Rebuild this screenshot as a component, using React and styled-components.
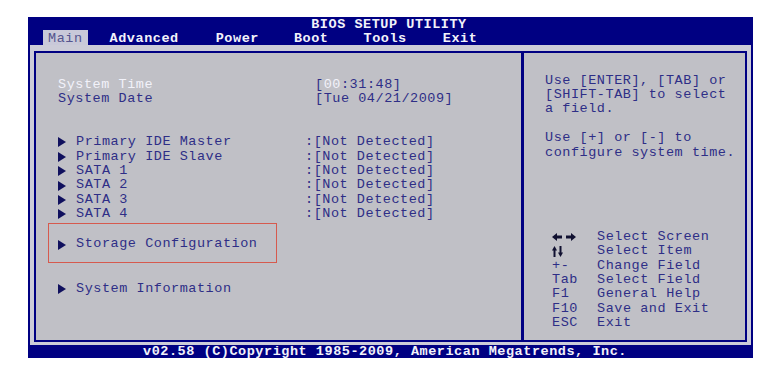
import React from 'react';
import styled, { createGlobalStyle } from 'styled-components';

const NAVY = '#000082';
const PANEL = '#c0c0c6';
const FRAME = '#ccccd8';
const TEXT = '#2e2e86';
const WHITE = '#f2f2fa';
const FONT = '"Liberation Mono", "Courier New", monospace';

const GlobalStyle = createGlobalStyle`
  html, body { margin: 0; padding: 0; background: #ffffff; }
  body { font-family: ${FONT}; }
  * { box-sizing: border-box; }
`;

const Screen = styled.div`
  margin: 17px 0 0 28px;
  width: 725px;
  height: 341px;
  background: ${NAVY};
  display: flex;
  flex-direction: column;
  font-family: ${FONT};
  font-size: 13.5px;
  letter-spacing: 0.54px;
  line-height: 14.4px;
  color: ${TEXT};
`;

const Title = styled.div`
  height: 13px;
  line-height: 13px;
  padding-top: 1px;
  text-align: center;
  padding-right: 3px;
  font-weight: bold;
  color: ${WHITE};
  white-space: pre;
`;

const MenuBar = styled.div`
  height: 15px;
  display: flex;
  padding-left: 15px;
`;

const MenuItem = styled.div`
  padding: 0 5px;
  line-height: 15px;
  padding-top: 1px;
  margin-right: ${p => p.$gap}px;
  font-weight: ${p => (p.$active ? 'normal' : 'bold')};
  background: ${p => (p.$active ? '#c9c9d9' : 'transparent')};
  color: ${p => (p.$active ? '#55558e' : WHITE)};
`;

const Frame = styled.div`
  flex: 1;
  margin: 0 2px;
  background: ${FRAME};
  padding: 6px 4px 3px 4px;
  display: flex;
`;

const Panels = styled.div`
  flex: 1;
  display: grid;
  grid-template-columns: 485px 1fr;
  border: 2px solid ${NAVY};
  background: ${PANEL};
`;

const LeftPanel = styled.div`
  padding: 24.5px 0 0 12px;
  display: flex;
  flex-direction: column;
`;

const Group = styled.div`
  padding-left: 10px;
  margin-top: ${p => p.$top || 0}px;
  display: flex;
  flex-direction: column;
`;

const Row = styled.div`
  display: flex;
  white-space: pre;
  height: 14.4px;
`;

const Label = styled.div`
  width: ${p => p.$w}px;
  flex: none;
  display: flex;
  align-items: center;
  color: ${p => (p.$selected ? WHITE : TEXT)};
`;

const Bullet = styled.svg`
  width: 18px;
  height: 10px;
  flex: none;
`;

const Value = styled.span`
  color: ${TEXT};
`;

const Hi = styled.span`
  color: ${WHITE};
`;

const Highlight = styled.div`
  margin-top: 1.5px;
  width: 229px;
  height: 40px;
  border: 1px solid #d65a4e;
  padding: 13.3px 0 0 9px;
`;

const RightPanel = styled.div`
  border-left: 3px solid ${NAVY};
  padding: 20.5px 0 9.5px 21px;
  display: flex;
  flex-direction: column;
`;

const HelpText = styled.div`
  white-space: pre;
  margin-bottom: ${p => p.$gap || 0}px;
`;

const Legend = styled.div`
  margin-top: auto;
  margin-left: 7px;
  display: grid;
  grid-template-columns: 45px auto;
  grid-auto-rows: 14.4px;
  white-space: pre;
`;

const Key = styled.div`
  display: flex;
  align-items: center;
`;

const Footer = styled.div`
  height: 13px;
  line-height: 13px;
  text-align: center;
  padding-right: 11px;
  font-weight: bold;
  color: ${WHITE};
  white-space: pre;
`;

const Arrow = () => (
  <Bullet viewBox="0 0 18 10">
    <polygon points="0,0 8,5 0,10" fill="#10105e" />
  </Bullet>
);

const LeftRight = () => (
  <svg width="24" height="8" viewBox="0 0 24 8">
    <polygon points="0,4 5,0 5,8" fill="#101030" />
    <rect x="5" y="2.5" width="5" height="3" fill="#101030" />
    <rect x="14" y="2.5" width="5" height="3" fill="#101030" />
    <polygon points="19,0 24,4 19,8" fill="#101030" />
  </svg>
);

const UpDown = () => (
  <svg width="11" height="11" viewBox="0 0 11 11">
    <polygon points="0,4.5 2.5,0 5,4.5" fill="#101030" />
    <rect x="1.5" y="4" width="2" height="7" fill="#101030" />
    <rect x="7.5" y="0" width="2" height="7" fill="#101030" />
    <polygon points="6,6.5 11,6.5 8.5,11" fill="#101030" />
  </svg>
);

const menu = [
  { name: 'Main', active: true, gap: 17 },
  { name: 'Advanced', gap: 27 },
  { name: 'Power', gap: 25 },
  { name: 'Boot', gap: 25 },
  { name: 'Tools', gap: 26 },
  { name: 'Exit', gap: 0 },
];

const devices = ['Primary IDE Master', 'Primary IDE Slave', 'SATA 1', 'SATA 2', 'SATA 3', 'SATA 4'];

const legend = [
  [<LeftRight key="lr" />, 'Select Screen'],
  [<UpDown key="ud" />, 'Select Item'],
  ['+-', 'Change Field'],
  ['Tab', 'Select Field'],
  ['F1', 'General Help'],
  ['F10', 'Save and Exit'],
  ['ESC', 'Exit'],
];

export default function App() {
  return (
    <>
      <GlobalStyle />
      <Screen>
        <Title>BIOS SETUP UTILITY</Title>
        <MenuBar>
          {menu.map(m => (
            <MenuItem key={m.name} $active={m.active} $gap={m.gap}>{m.name}</MenuItem>
          ))}
        </MenuBar>
        <Frame>
          <Panels>
            <LeftPanel>
              <Group>
                <Row>
                  <Label $w={257} $selected>System Time</Label>
                  <Value>[<Hi>00</Hi>:31:48]</Value>
                </Row>
                <Row>
                  <Label $w={257}>System Date</Label>
                  <Value>[Tue 04/21/2009]</Value>
                </Row>
              </Group>
              <Group $top={29}>
                {devices.map(d => (
                  <Row key={d}>
                    <Label $w={247}><Arrow />{d}</Label>
                    <Value>:[Not Detected]</Value>
                  </Row>
                ))}
              </Group>
              <Highlight>
                <Row>
                  <Label $w={210}><Arrow />Storage Configuration</Label>
                </Row>
              </Highlight>
              <Group $top={18.5}>
                <Row>
                  <Label $w={247}><Arrow />System Information</Label>
                </Row>
              </Group>
            </LeftPanel>
            <RightPanel>
              <HelpText $gap={14.4}>{'Use [ENTER], [TAB] or\n[SHIFT-TAB] to select\na field.'}</HelpText>
              <HelpText>{'Use [+] or [-] to\nconfigure system time.'}</HelpText>
              <Legend>
                {legend.map(([k, d], i) => (
                  <React.Fragment key={i}>
                    <Key>{k}</Key>
                    <div>{d}</div>
                  </React.Fragment>
                ))}
              </Legend>
            </RightPanel>
          </Panels>
        </Frame>
        <Footer>v02.58 (C)Copyright 1985-2009, American Megatrends, Inc.</Footer>
      </Screen>
    </>
  );
}
